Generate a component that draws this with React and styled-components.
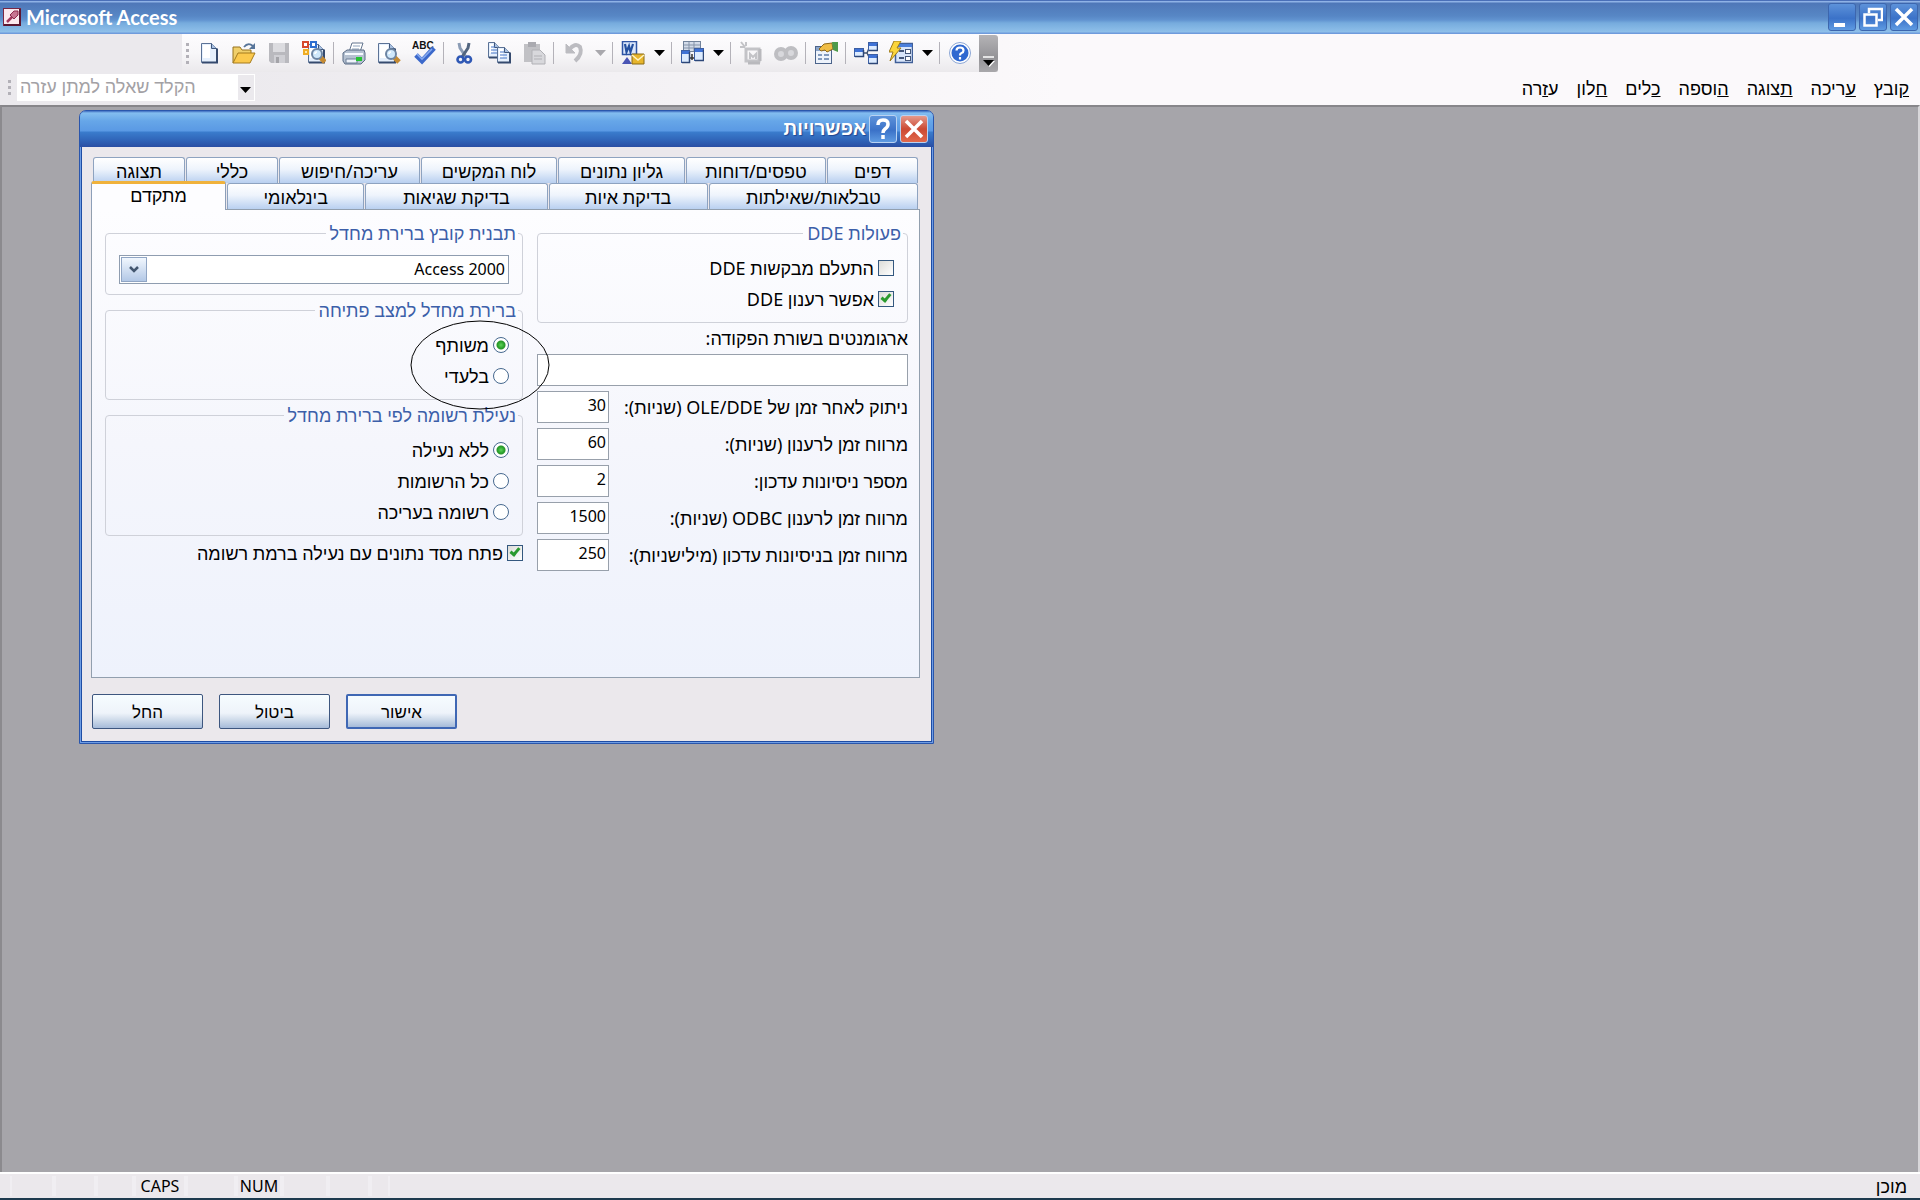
import React from "react";
import styled, { createGlobalStyle, css } from "styled-components";

const GlobalStyle = createGlobalStyle`
  *, *::before, *::after { box-sizing: border-box; }
  body { margin: 0; font-family: "Noto Sans", "Liberation Sans", sans-serif; font-size: 16px; color: #000; }
  button, input, select { font-family: inherit; color: inherit; margin: 0; padding: 0; }
`;

const Screen = styled.div`
  min-height: 100vh;
  display: flex;
  flex-direction: column;
  background: #a6a5aa;
`;

/* ---------- application frame ---------- */

const TitleBar = styled.header`
  height: 34px;
  flex: none;
  display: flex;
  align-items: center;
  gap: 5px;
  padding: 0 2px 0 3px;
  color: #fff;
  background: linear-gradient(#4a6fb8 0 1px, #8fb2e6 1px 2px, #4f77b8 3px, #5787c5 16px, #6193d0 20px, #76abdd 23px, #8fc0ea 32px, #6f9bdc 33px);
`;

const AppName = styled.h1`
  margin: 0;
  flex: 1;
  font: 700 20px/24px Lato, "Open Sans", sans-serif;
`;

const WindowButtons = styled.div`
  display: flex;
  gap: 3px;
`;

const frameTone = {
  blue: "linear-gradient(#5d92da, #3b72c8 55%, #5e9be2)",
  red: "linear-gradient(#e59a8c, #cc4a34 50%, #e2694c)",
};

const FrameButton = styled.button`
  width: 28px;
  height: 28px;
  display: grid;
  place-items: center;
  border: 1px solid ${(p) => (p.$light ? "#b9d2f2" : "#3c66ae")};
  border-radius: 3px;
  background: ${(p) => frameTone[p.$tone || "blue"]};
  color: #fff;
`;

const Bars = styled.div`
  flex: none;
  height: 71px;
  display: flex;
  flex-direction: column;
  background: linear-gradient(90deg, #ebe9ed 180px, #fbf9fb 1060px);
`;

const ToolBar = styled.div`
  align-self: flex-start;
  height: 38px;
  margin-left: 182px;
  display: flex;
  align-items: center;
  background: linear-gradient(#fdfcfe, #f8f7f9 50%, #ebe9ec);
`;

const Grip = styled.span`
  flex: none;
  width: 3px;
  height: ${(p) => p.$h}px;
  margin: 0 ${(p) => p.$after}px 0 ${(p) => p.$before}px;
  background: repeating-linear-gradient(#b3b1b8 0 3px, transparent 3px 6px);
`;

const ToolButton = styled.button`
  width: ${(p) => (p.$drop ? 19 : 35)}px;
  height: 32px;
  display: grid;
  place-items: center;
  border: 0;
  background: none;
`;

const Separator = styled.span`
  width: 1px;
  height: 22px;
  margin: 0 2px;
  background: #b4b2b9;
`;

const Overflow = styled.button`
  width: 19px;
  height: 37px;
  margin-left: 2px;
  display: grid;
  place-items: end center;
  border: 0;
  border-radius: 0 3px 3px 0;
  padding-bottom: 5px;
  background: linear-gradient(#b4b3b6, #949397 60%, #a9a8ab);
`;

const MenuRow = styled.div`
  flex: 1;
  display: flex;
  align-items: center;
  padding: 0 11px 2px 0;
`;

const AskBox = styled.div`
  width: 238px;
  height: 27px;
  display: flex;
  border: 1px solid #fff;
  background: #fff;
`;

const AskInput = styled.input`
  flex: 1;
  min-width: 0;
  border: 0;
  padding: 0 0 3px 2px;
  background: transparent;
  font-size: 18px;
  &::placeholder { color: #a3a1a5; opacity: 1; }
`;

const AskDrop = styled.button`
  width: 16px;
  border: 0;
  background: #ebe9ed;
`;

const Menu = styled.nav`
  margin-left: auto;
  direction: rtl;
  display: flex;
  gap: 18px;
  font-size: 18px;
`;

const MenuItem = styled.a`
  color: #000;
  text-decoration: none;
  line-height: 22px;
`;

const Workspace = styled.main`
  position: relative;
  flex: 1;
  border-top: 2px solid #87868a;
  border-left: 2px solid #8b8a8e;
  border-right: 2px solid #d8d7da;
`;

const StatusBar = styled.footer`
  flex: none;
  height: 28px;
  display: flex;
  align-items: center;
  padding: 0 13px 0 10px;
  border-top: 2px solid #fff;
  border-bottom: 2px solid #1d3a4e;
  background: #ebe8ec;
`;

const Cell = styled.span`
  width: ${(p) => p.$w}px;
  height: 20px;
  line-height: 20px;
  text-align: center;
  border: solid #f0eef2;
  border-width: 0 2px;
`;

const Ready = styled.span`
  margin-left: auto;
  font-size: 18px;
  line-height: 22px;
`;

/* ---------- dialog ---------- */

const Dialog = styled.section`
  position: absolute;
  left: 77px;
  top: 3px;
  width: 855px;
  direction: rtl;
  font-size: 18px;
  border: 1px solid #2a56ac;
  border-radius: 7px 7px 0 0;
  background: #ebe8ec;
  box-shadow: inset 0 0 0 1px #6f9de4, inset 0 0 0 2px #1f4da4;
`;

const DialogTitle = styled.header`
  height: 36px;
  display: flex;
  align-items: center;
  gap: 3px;
  padding: 0 5px;
  border-radius: 6px 6px 0 0;
  background: linear-gradient(#3d6bc0, #83bdf0 2px, #66a6e8 10px, #5a99e4 20px, #3a7ccd 21px, #2f62b6 30px, #2a4ea3);
`;

const DialogName = styled.h2`
  margin: 0;
  color: #fff;
  font: 700 19px/22px "Liberation Sans", sans-serif;
  text-shadow: 1px 1px 1px #1f448f;
`;

const DialogBody = styled.div`
  padding: 10px 13px 14px 11px;
`;

const TabRow = styled.div`
  display: grid;
  grid-template-columns: ${(p) => p.$cols};
  column-gap: 1px;
  margin: 0 2px 0 ${(p) => p.$end}px;
  height: 26px;
`;

const activeTab = css`
  position: relative;
  margin: -2px 0 -1px;
  padding-bottom: 4px;
  border-color: #8d9fb9;
  border-top: 3px solid #f0b23c;
  background: #fdfdff;
`;

const Tab = styled.button`
  border: 1px solid #8ea3c0;
  border-bottom: 0;
  border-radius: 3px 3px 0 0;
  background: linear-gradient(#fff, #eef4fc 45%, #b9d0f0);
  font-size: 18px;
  line-height: 22px;
  ${(p) => p.$active && activeTab}
`;

const Panel = styled.div`
  height: 469px;
  display: grid;
  grid-template-columns: 371fr 418fr;
  column-gap: 14px;
  align-items: start;
  padding: 12px 11px 12px 13px;
  border: 1px solid #929fae;
  background: linear-gradient(#fdfdff, #f5f6fc 50%, #eef2fc);
`;

const Column = styled.div`
  display: flex;
  flex-direction: column;
  gap: ${(p) => p.$gap}px;
`;

const Group = styled.fieldset`
  min-width: 0;
  margin: 0;
  padding: ${(p) => (p.$tall ? "11px 13px 10px" : "8px 13px 8px")};
  border: 1px solid #cfd1d9;
  border-radius: 4px;
`;

const Legend = styled.legend`
  margin-right: -9px;
  padding: 0 2px 0 4px;
  line-height: 22px;
  color: #3c5fa9;
`;

const Option = styled.label`
  display: flex;
  align-items: center;
  gap: 4px;
  height: ${(p) => (p.$flush ? 26 : 31)}px;
  line-height: 22px;
`;

const Tick = styled.input`
  appearance: none;
  flex: none;
  width: 16px;
  height: 16px;
  border: 1px solid #34587f;
  background: linear-gradient(135deg, #dcdcd8, #fff);
  &:checked::after {
    content: "";
    display: block;
    width: 6px;
    height: 10px;
    margin: 0 4px 0 0;
    border: solid #2a9a2d;
    border-width: 0 3px 3px 0;
    transform: rotate(40deg);
  }
`;

const Radio = styled.input`
  appearance: none;
  flex: none;
  width: 16px;
  height: 16px;
  border: 1px solid #47698f;
  border-radius: 50%;
  background: #fff;
  &:checked {
    background: radial-gradient(circle, #5fd35a 0, #2ea52e 3px, #2a952b 4px, #fff 5px);
  }
`;

const SelectWrap = styled.div`
  position: relative;
`;

const Select = styled.select`
  appearance: none;
  display: block;
  width: 100%;
  height: 29px;
  padding: 0 3px 2px;
  border: 1px solid #8f9db0;
  border-radius: 0;
  background: #fff;
  font-size: 16px;
`;

const SelectArrow = styled.span`
  position: absolute;
  left: 2px;
  top: 2px;
  width: 26px;
  height: 25px;
  display: grid;
  place-items: center;
  border: 1px solid #90a5c4;
  background: linear-gradient(#f1f7fe, #b3c8e6);
  pointer-events: none;
`;

const FieldLabel = styled.label`
  line-height: 21px;
  white-space: nowrap;
`;

const TextField = styled.input`
  width: ${(p) => (p.$short ? "72px" : "100%")};
  height: 32px;
  padding: 0 2px 4px;
  border: 1px solid #98a0ab;
  background: #fff;
  font-size: 16px;
`;

const FieldRow = styled.div`
  display: flex;
  align-items: center;
  justify-content: space-between;
`;

const Actions = styled.div`
  display: flex;
  justify-content: flex-end;
  gap: 16px;
  margin: 16px 0 0 1px;
`;

const Action = styled.button`
  width: 111px;
  height: 35px;
  border: ${(p) => (p.$primary ? "2px solid #3f67b4" : "1px solid #3d567f")};
  border-radius: 2px;
  background: linear-gradient(#f6fcff, #eef3fa 55%, #cfdbea 75%, #a6bbd9);
  font-size: 17px;
`;

const Highlight = styled.svg`
  position: absolute;
  left: 330px;
  top: 209px;
  width: 140px;
  height: 90px;
  pointer-events: none;
`;

/* ---------- icons ---------- */

const Svg = ({ children, w = 24, h = 24 }) => (
  <svg width={w} height={h} viewBox={`0 0 ${w} ${h}`} fill="none" aria-hidden="true">{children}</svg>
);

const DropArrow = ({ color = "#000" }) => (
  <Svg w={12} h={6}><path d="M0 0h11L5.5 6z" fill={color} /></Svg>
);

const Paper = ({ x = 4, y = 2, w = 16, h = 20 }) => (
  <>
    <path d={`M${x + 0.5} ${y + 0.5}h${w - 6}l5 5v${h - 6}h-${w - 1}z`} fill="#e6f0fd" stroke="#5b7296" />
    <path d={`M${x + 2} ${y + 2}h${w - 9}v${h - 7}h-${w - 9}z`} fill="#fff" />
    <path d={`M${x + w - 5.5} ${y + 0.5}v5h5`} fill="#a9c0e0" stroke="#40577c" />
    <path d={`M${x + 1} ${y + h - 0.5}h${w - 1}v-${h - 6}`} stroke="#354a6e" strokeWidth="2" />
  </>
);

const Lens = ({ x, y }) => (
  <>
    <path d={`M${x + 3} ${y + 3}l5 5`} stroke="#c48a33" strokeWidth="5" />
    <circle cx={x} cy={y} r="5" fill="#cfe8fb" stroke="#6d85a3" strokeWidth="2" />
    <path d={`M${x - 2} ${y}q0-2 2-2`} stroke="#fff" strokeWidth="1.6" />
  </>
);

const MiniWindow = ({ x, y, w, h }) => (
  <>
    <rect x={x + 0.5} y={y + 0.5} width={w - 1} height={h - 1} fill="#dcebff" stroke="#3c5fa3" />
    <rect x={x + 1} y={y + 1} width={w - 2} height="3" fill="#3f72d6" />
    <path d={`M${x + 1} ${y + h - 0.5}h${w - 1.5}V${y + 2}`} stroke="#2d4778" strokeWidth="1.5" />
  </>
);

const icons = {
  new: <Svg><Paper /></Svg>,
  open: (
    <Svg>
      <path d="M1 22V6h7l2 3h9v4" fill="#f0cf6a" stroke="#96731f" />
      <path d="M1 22l5-10h17l-5 10z" fill="#fbc94d" stroke="#a57b1c" />
      <path d="M12 6q4-5 9-1" stroke="#57759a" strokeWidth="1.8" /><path d="M23 2v6h-6z" fill="#57759a" />
    </Svg>
  ),
  save: (
    <Svg>
      <path d="M2 2h20v20H4l-2-2z" fill="#b9b9be" /><rect x="6" y="2" width="12" height="9" fill="#dcdce0" />
      <rect x="7" y="14" width="11" height="8" fill="#cfcfd4" /><rect x="9" y="16" width="3" height="6" fill="#a4a4a9" />
    </Svg>
  ),
  find: (
    <Svg>
      <Paper x={6} y={3} w={16} h={19} />
      <rect x="1" y="1" width="5" height="5" stroke="#d6482c" strokeWidth="2" fill="#fff" />
      <rect x="9" y="1" width="5" height="5" stroke="#2f6fd0" strokeWidth="2" fill="#fff" />
      <rect x="2" y="9" width="4" height="4" stroke="#efad26" strokeWidth="2" fill="#ffe9a8" />
      <Lens x={15} y={13} />
    </Svg>
  ),
  print: (
    <Svg>
      <path d="M7 11l3-9h11l-3 9z" fill="#fff" stroke="#63758f" />
      <path d="M11 5h7M10 8h7" stroke="#8ea2bd" />
      <path d="M1 12l4-3h17l1 3v7l-4 4H3l-2-3z" fill="#b5c1d1" stroke="#596b85" />
      <path d="M3 13h18" stroke="#f6faff" strokeWidth="2" />
      <path d="M4 18h11v4H4z" fill="#eef3fa" stroke="#6c7e97" /><rect x="14" y="16" width="6" height="4" fill="#25c332" />
    </Svg>
  ),
  preview: <Svg><Paper x={1} y={2} w={17} h={20} /><Lens x={14} y={13} /></Svg>,
  spell: (
    <Svg>
      <text x="0" y="8" fill="#111" style={{ font: '700 10px "Liberation Sans", sans-serif' }}>ABC</text>
      <path d="M4 14l6 6L22 7" stroke="#3c69cb" strokeWidth="5" /><path d="M5 13l5 5L20 8" stroke="#86aaf0" strokeWidth="1.6" />
    </Svg>
  ),
  cut: (
    <Svg>
      <path d="M7 2l1 5 6 9" stroke="#8b9cb5" strokeWidth="3" /><path d="M17 2l-1 5-6 9" stroke="#52657f" strokeWidth="3" />
      <circle cx="8.5" cy="18.5" r="3" stroke="#2f58b5" strokeWidth="2.6" /><circle cx="16" cy="18.5" r="3" stroke="#2f58b5" strokeWidth="2.6" />
    </Svg>
  ),
  copy: (
    <Svg>
      <Paper x={1} y={1} w={12} h={16} /><path d="M4 6h4M4 9h6M4 12h6" stroke="#4474c6" />
      <Paper x={10} y={6} w={13} h={16} /><path d="M13 11h4M13 14h7M13 17h7" stroke="#4474c6" />
    </Svg>
  ),
  paste: (
    <Svg>
      <rect x="2" y="3" width="16" height="18" fill="#c1c1c5" /><rect x="6" y="1" width="8" height="5" fill="#aaaab0" />
      <path d="M10 9h8l5 5v9H10z" fill="#d8d8dc" stroke="#b0b0b5" /><path d="M12 15h8M12 18h8" stroke="#b0b0b5" />
    </Svg>
  ),
  undo: <Svg><path d="M4 3v9h9z" fill="#bcbcc1" stroke="#bcbcc1" /><path d="M7 9q6-8 11-3 3 7-5 14" stroke="#bcbcc1" strokeWidth="4" /></Svg>,
  word: (
    <Svg>
      <rect x="1.5" y=".5" width="14" height="13" fill="#dbe7fb" stroke="#2f55a4" strokeWidth="1.5" />
      <path d="M4 3l1.5 8L8 5l1.5 6L12 3" stroke="#24509f" strokeWidth="2.2" />
      <path d="M1 23l5-7 5 7z" fill="#4a55b4" />
      <path d="M11 13h12v10H11z" fill="#e7b52c" stroke="#8a6a14" /><path d="M11 14l6 5 6-5" stroke="#fff3c0" strokeWidth="1.5" />
    </Svg>
  ),
  analyze: (
    <Svg>
      <rect x="3.5" y=".5" width="17" height="10" fill="#d3dcea" stroke="#72839b" /><path d="M4 4h16M4 7h16M9 1v9M14 1v9" stroke="#8593a8" />
      <path d="M10 17h5M12 13v6" stroke="#333" strokeWidth="1.5" /><MiniWindow x={1} y={9} w={9} h={13} /><MiniWindow x={14} y={7} w={10} h={13} />
    </Svg>
  ),
  code: (
    <Svg>
      <path d="M7 8h13v12H7z" stroke="#c3c3c7" strokeWidth="3" /><path d="M2 1l4 5M1 6h5M7 1v4M11 18v-5l3 3 3-3v5" stroke="#c3c3c7" strokeWidth="2" />
      <path d="M9 22h12M21 8v12" stroke="#b9b9bd" strokeWidth="3" />
    </Svg>
  ),
  link: <Svg><circle cx="7" cy="13" r="5" fill="#d8d8dc" stroke="#bebec2" strokeWidth="4" /><circle cx="17" cy="12" r="5" fill="#d8d8dc" stroke="#bebec2" strokeWidth="4" /></Svg>,
  props: (
    <Svg>
      <rect x="1.5" y="5.5" width="16" height="17" fill="#eef3fb" stroke="#4c648b" /><rect x="2" y="6" width="15" height="4" fill="#8ba4c8" />
      <path d="M4 14h4M10 14h5M4 18h4M10 18h5" stroke="#5f7da9" strokeWidth="1.5" />
      <path d="M5 8l5-5 8-1 1 6-6 3-2-2-4 1z" fill="#f0bd45" stroke="#8d681b" /><path d="M18 1h6v10l-5-2z" fill="#4d9a4a" />
    </Svg>
  ),
  relations: (
    <Svg>
      <path d="M9 12h4l3-7M13 12l3 6" stroke="#41536f" strokeWidth="1.5" />
      <MiniWindow x={0} y={7} w={10} h={9} /><MiniWindow x={14} y={1} w={10} h={9} /><MiniWindow x={14} y={13} w={10} h={10} />
    </Svg>
  ),
  object: (
    <Svg>
      <rect x="6.5" y="2.5" width="17" height="19" fill="#d9e6fa" stroke="#405f98" strokeWidth="1.5" /><rect x="7" y="3" width="16" height="3" fill="#4b7fdb" />
      <path d="M10 10h5M10 17h5" stroke="#46587a" strokeWidth="2" /><rect x="16.5" y="8.5" width="5" height="4" fill="#fff" stroke="#46587a" /><rect x="16.5" y="15.5" width="5" height="4" fill="#fff" stroke="#46587a" />
      <path d="M5 0h7l-4 7h4L1 20l3-9H0z" fill="#fbd53b" stroke="#9d7a1c" />
    </Svg>
  ),
  help: (
    <Svg>
      <circle cx="12" cy="12" r="10.5" fill="#fff" stroke="#8ba6d5" /><circle cx="12" cy="12" r="8.5" fill="#2f68d0" />
      <path d="M8.5 9.5q0-3 3.5-3t3.5 3q0 1.8-2 2.500-1.500.600-1.500 2.500M12 16v2.400" stroke="#fff" strokeWidth="2.2" />
    </Svg>
  ),
};

const toolbar = [
  ["new", "New"], ["open", "Open"], ["save", "Save"], ["find", "File search"], null,
  ["print", "Print"], ["preview", "Print preview"], ["spell", "Spelling"], null,
  ["cut", "Cut"], ["copy", "Copy"], ["paste", "Paste"], null,
  ["undo", "Undo", "#a9a8ad"], null,
  ["word", "Office links", "#000"], null,
  ["analyze", "Analyze", "#000"], null,
  ["code", "Code"], ["link", "Hyperlink"], null,
  ["props", "Properties"], null,
  ["relations", "Relationships"], ["object", "New object", "#000"], null,
  ["help", "Help"],
];

const menus = [["ק", "ובץ"], ["ע", "ריכה"], ["ת", "צוגה"], ["ה", "וספה"], ["כ", "לים"], ["ח", "לון"], ["ע", "רה", "ז"]];

const timings = [
  ["ole", "ניתוק לאחר זמן של OLE/DDE (שניות):", "30"],
  ["refresh", "מרווח זמן לרענון (שניות):", "60"],
  ["retries", "מספר ניסיונות עדכון:", "2"],
  ["odbc", "מרווח זמן לרענון ODBC (שניות):", "1500"],
  ["retryms", "מרווח זמן בניסיונות עדכון (מילישניות):", "250"],
];

const firstTabs = ["דפים", "טפסים/דוחות", "גליון נתונים", "לוח המקשים", "עריכה/חיפוש", "כללי", "תצוגה"];
const secondTabs = ["טבלאות/שאילתות", "בדיקת איות", "בדיקת שגיאות", "בינלאומי", "מתקדם"];

const CloseGlyph = () => <Svg w={20} h={20}><path d="M2 2l16 16M18 2L2 18" stroke="#fff" strokeWidth="3.5" /></Svg>;

function OptionsDialog() {
  return (
    <Dialog role="dialog" aria-labelledby="dialog-name" lang="he">
      <DialogTitle>
        <FrameButton $tone="red" $light aria-label="סגור"><CloseGlyph /></FrameButton>
        <FrameButton $light aria-label="עזרה">
          <Svg w={20} h={24}><path d="M5 8q0-5 5-5t5 4q0 3-3 5-2 1.500-2 4M10 18v4" stroke="#fff" strokeWidth="3.5" /></Svg>
        </FrameButton>
        <DialogName id="dialog-name">אפשרויות</DialogName>
      </DialogTitle>
      <DialogBody>
        <TabRow $cols="91fr 140fr 127fr 136fr 141fr 92fr 92fr" $end={2}>
          {firstTabs.map((t) => <Tab key={t}>{t}</Tab>)}
        </TabRow>
        <TabRow $cols="209fr 159fr 182fr 137fr 135fr" $end={0}>
          {secondTabs.map((t) => <Tab key={t} $active={t === "מתקדם"}>{t}</Tab>)}
        </TabRow>
        <Panel>
          <Column $gap={5}>
            <Group>
              <Legend>פעולות DDE</Legend>
              <Option><Tick type="checkbox" />התעלם מבקשות DDE</Option>
              <Option><Tick type="checkbox" defaultChecked />אפשר רענון DDE</Option>
            </Group>
            <FieldLabel htmlFor="args">ארגומנטים בשורת הפקודה:</FieldLabel>
            <TextField id="args" type="text" />
            {timings.map(([id, label, value]) => (
              <FieldRow key={id}>
                <FieldLabel htmlFor={id}>{label}</FieldLabel>
                <TextField $short id={id} type="text" defaultValue={value} />
              </FieldRow>
            ))}
          </Column>
          <Column $gap={4}>
            <Group $tall>
              <Legend>תבנית קובץ ברירת מחדל</Legend>
              <SelectWrap>
                <Select aria-label="תבנית קובץ ברירת מחדל"><option>Access 2000</option></Select>
                <SelectArrow><Svg w={10} h={8}><path d="M1 1l4 4 4-4" stroke="#43566f" strokeWidth="2.5" /></Svg></SelectArrow>
              </SelectWrap>
            </Group>
            <Group>
              <Legend>ברירת מחדל למצב פתיחה</Legend>
              <Option><Radio type="radio" name="mode" defaultChecked />משותף</Option>
              <Option><Radio type="radio" name="mode" />בלעדי</Option>
            </Group>
            <Group>
              <Legend>נעילת רשומה לפי ברירת מחדל</Legend>
              <Option><Radio type="radio" name="lock" defaultChecked />ללא נעילה</Option>
              <Option><Radio type="radio" name="lock" />כל הרשומות</Option>
              <Option><Radio type="radio" name="lock" />רשומה בעריכה</Option>
            </Group>
            <Option $flush><Tick type="checkbox" defaultChecked />פתח מסד נתונים עם נעילה ברמת רשומה</Option>
          </Column>
        </Panel>
        <Actions>
          <Action $primary>אישור</Action>
          <Action>ביטול</Action>
          <Action>החל</Action>
        </Actions>
      </DialogBody>
      <Highlight viewBox="0 0 140 90"><ellipse cx="70" cy="45" rx="69" ry="44" fill="none" stroke="#000" /></Highlight>
    </Dialog>
  );
}

export default function App() {
  return (
    <Screen>
      <GlobalStyle />
      <TitleBar>
        <Svg w={18} h={18}>
          <rect x=".5" y=".5" width="17" height="17" fill="#fbe9ef" stroke="#7a2744" /><path d="M17 1v16H1" stroke="#5b1731" strokeWidth="2" />
          <path d="M4 14l6-6" stroke="#a2385d" strokeWidth="2.5" /><path d="M7 7l4-4h4v4l-4 4z" fill="#c77591" stroke="#8d2b4d" />
        </Svg>
        <AppName>Microsoft Access</AppName>
        <WindowButtons>
          <FrameButton aria-label="Minimize"><Svg w={20} h={20}><path d="M2 16h11v4H2z" fill="#fff" /></Svg></FrameButton>
          <FrameButton aria-label="Restore"><Svg w={20} h={20}><path d="M6 6V2h13v11h-4" stroke="#fff" strokeWidth="2.5" /><rect x="1.5" y="7.5" width="12" height="11" stroke="#fff" strokeWidth="2.5" /></Svg></FrameButton>
          <FrameButton aria-label="Close"><CloseGlyph /></FrameButton>
        </WindowButtons>
      </TitleBar>
      <Bars>
        <ToolBar role="toolbar">
          <Grip $h={21} $before={4} $after={2} />
          {toolbar.map((item, i) =>
            item ? (
              <React.Fragment key={item[0]}>
                <ToolButton aria-label={item[1]}>{icons[item[0]]}</ToolButton>
                {item[2] && <ToolButton $drop aria-label={`${item[1]} menu`}><DropArrow color={item[2]} /></ToolButton>}
              </React.Fragment>
            ) : (
              <Separator key={i} />
            )
          )}
          <Overflow aria-label="Toolbar options">
            <Svg w={12} h={11}><path d="M0 1h11" stroke="#fff" strokeWidth="1.5" /><path d="M1 5h11l-5.500 6z" fill="#fff" /><path d="M0 4h11L5.500 10z" fill="#000" /></Svg>
          </Overflow>
        </ToolBar>
        <MenuRow>
          <Grip $h={15} $before={8} $after={6} />
          <AskBox>
            <AskInput type="text" aria-label="הקלד שאלה למתן עזרה" placeholder="הקלד שאלה למתן עזרה" />
            <AskDrop aria-label="הצג שאלות"><DropArrow /></AskDrop>
          </AskBox>
          <Menu lang="he">
            {menus.map(([a, b, mid]) => (
              <MenuItem key={a + b} href="#">{mid ? <>{a}<u>{mid}</u>{b}</> : <><u>{a}</u>{b}</>}</MenuItem>
            ))}
          </Menu>
        </MenuRow>
      </Bars>
      <Workspace><OptionsDialog /></Workspace>
      <StatusBar>
        <Cell $w={44} /><Cell $w={42} /><Cell $w={38} />
        <Cell $w={52}>CAPS</Cell><Cell $w={50} /><Cell $w={46}>NUM</Cell>
        <Cell $w={46} /><Cell $w={42} /><Cell $w={20} />
        <Ready lang="he">מוכן</Ready>
      </StatusBar>
    </Screen>
  );
}
